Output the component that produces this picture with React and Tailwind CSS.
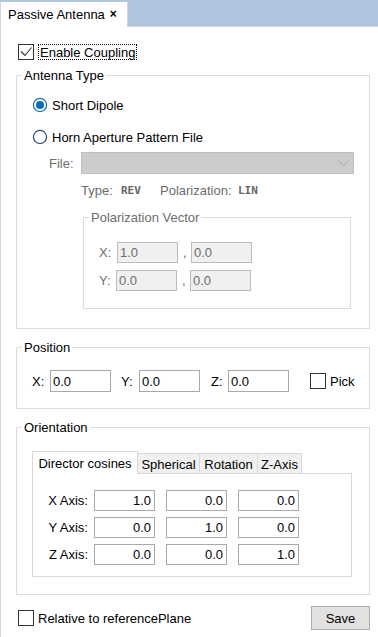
import React from 'react';

const CheckBox = ({ checked }) => (
  <span className="w-[16px] h-[16px] border border-[#333333] bg-white flex items-center justify-center shrink-0">
    {checked && (
      <svg width="14" height="14" viewBox="0 0 14 14">
        <path d="M2 6.5 L6 10.5 L12.5 2.5" fill="none" stroke="#333333" strokeWidth="1.1" />
      </svg>
    )}
  </span>
);

const Radio = ({ checked }) => (
  <svg width="16" height="16" viewBox="0 0 16 16" className="shrink-0">
    <circle cx="8" cy="8" r="6.6" fill="white" stroke={checked ? '#0f6cbd' : '#2c4a6a'} strokeWidth="1.2" />
    {checked && <circle cx="8" cy="8" r="4" fill="#0f6cbd" />}
  </svg>
);

const Field = ({ value, disabled, right, h = 'h-[21px]' }) => (
  <div
    className={`w-[61px] ${h} border flex items-center px-[2px] text-[13px] leading-none ${
      disabled ? 'border-[#bcbcbc] bg-[#f0f0f0] text-[#6d6d6d]' : 'border-[#a9a9a9] bg-white text-black'
    } ${right ? 'justify-end pr-[3px]' : ''}`}
  >
    {value}
  </div>
);

const Group = ({ title, className, children }) => (
  <fieldset className={`border border-[#dcdcdc] ${className}`}>
    <legend className="ml-[5px] px-[2px] leading-[15px] text-[13px]">{title}</legend>
    {children}
  </fieldset>
);

const Tab = ({ label, active, w }) =>
  active ? (
    <div className={`${w} h-[23px] -mb-px bg-white border border-b-0 border-[#d9d9d9] flex items-center justify-center z-10`}>
      {label}
    </div>
  ) : (
    <div className={`${w} h-[20px] bg-[#f0f0f0] border-t border-r border-[#d9d9d9] flex items-center justify-center pt-[1px]`}>
      {label}
    </div>
  );

const axes = [
  ['X Axis:', '1.0', '0.0', '0.0'],
  ['Y Axis:', '0.0', '1.0', '0.0'],
  ['Z Axis:', '0.0', '0.0', '1.0'],
];

export default function App() {
  return (
    <div className="w-[378px] h-[637px] bg-white text-black text-[13px] leading-[15px] font-['Liberation_Sans',Arial,sans-serif] overflow-hidden">
      {/* tab bar */}
      <div className="h-[27px] bg-[#b0c4de] border-b border-[#d4d4d4] flex items-end">
        <div className="w-[128px] h-[25px] -mb-px bg-white border-l border-r border-[#d4d4d4] flex items-center pl-[7px]">
          <span>Passive Antenna</span>
          <span className="ml-[5px] text-[12px] font-bold">×</span>
        </div>
      </div>

      <div className="h-[610px] border-l border-[#dadada] flex flex-col">
        <div className="mt-[17px] ml-[17px] flex items-center h-[16px]">
          <CheckBox checked />
          <span className="ml-[4px] h-[16px] border border-dotted border-black flex items-center pl-[1px] pr-[1px]">Enable Coupling</span>
        </div>

        {/* Antenna Type */}
        <Group title="Antenna Type" className="mt-[8px] ml-[15px] w-[354px] h-[261px]">
          <div className="pl-[15px] flex flex-col">
            <div className="mt-[14px] h-[16px] flex items-center">
              <Radio checked />
              <span className="ml-[4px]">Short Dipole</span>
            </div>
            <div className="mt-[16px] h-[16px] flex items-center">
              <Radio />
              <span className="ml-[4px]">Horn Aperture Pattern File</span>
            </div>
            <div className="mt-[7px] ml-[17px] h-[22px] flex items-center">
              <span className="w-[32px] text-[#6d6d6d]">File:</span>
              <div className="w-[273px] h-[22px] bg-[#cccccc] border border-[#bfbfbf] flex items-center justify-end pr-[4px]">
                <svg width="11" height="7" viewBox="0 0 11 7">
                  <path d="M0.5 0.5 L5.5 5.5 L10.5 0.5" fill="none" stroke="#a6a6a6" strokeWidth="1" />
                </svg>
              </div>
            </div>
            <div className="mt-[9px] ml-[49px] h-[15px] flex items-center text-[#6d6d6d]">
              <span className="w-[40px]">Type:</span>
              <span className="w-[39px] font-bold text-[11px] font-['DejaVu_Sans_Mono',monospace] text-[#666666]">REV</span>
              <span className="w-[78px]">Polarization:</span>
              <span className="font-bold text-[11px] font-['DejaVu_Sans_Mono',monospace] text-[#666666]">LIN</span>
            </div>

            <fieldset className="mt-[12px] ml-[51px] w-[268px] h-[99px] border border-[#dcdcdc]">
              <legend className="ml-[5px] px-[2px] leading-[15px] text-[#6d6d6d]">Polarization Vector</legend>
              <div className="pl-[15px] flex flex-col text-[#6d6d6d]">
                <div className="mt-[17px] flex items-center">
                  <span className="w-[18px]">X:</span>
                  <Field value="1.0" disabled />
                  <span className="w-[13px] pl-[5px]">,</span>
                  <Field value="0.0" disabled />
                </div>
                <div className="mt-[7px] flex items-center">
                  <span className="w-[17px]">Y:</span>
                  <Field value="0.0" disabled />
                  <span className="w-[13px] pl-[5px]">,</span>
                  <Field value="0.0" disabled />
                </div>
              </div>
            </fieldset>
          </div>
        </Group>

        {/* Position */}
        <Group title="Position" className="mt-[11px] ml-[15px] w-[354px] h-[69px]">
          <div className="pl-[15px] mt-[15px] flex items-center">
            <span className="w-[18px]">X:</span>
            <Field value="0.0" h="h-[22px]" />
            <span className="ml-[10px] w-[18px]">Y:</span>
            <Field value="0.0" h="h-[22px]" />
            <span className="ml-[11px] w-[17px]">Z:</span>
            <Field value="0.0" h="h-[22px]" />
            <span className="ml-[21px]">
              <CheckBox />
            </span>
            <span className="ml-[4px]">Pick</span>
          </div>
        </Group>

        {/* Orientation */}
        <Group title="Orientation" className="mt-[11px] ml-[15px] w-[354px] h-[175px]">
          <div className="pl-[15px] mt-[16px]">
            <div className="flex items-end relative">
              <Tab label="Director cosines" active w="w-[106px]" />
              <Tab label="Spherical" w="w-[62px]" />
              <Tab label="Rotation" w="w-[58px]" />
              <Tab label="Z-Axis" w="w-[44px]" />
            </div>
            <div className="w-[320px] h-[104px] border border-[#d9d9d9] bg-white pt-[16px] flex flex-col gap-[6px]">
              {axes.map(([label, a, b, c]) => (
                <div key={label} className="flex items-center">
                  <span className="w-[61px] text-right pr-[6px]">{label}</span>
                  <Field value={a} right />
                  <span className="w-[11px]" />
                  <Field value={b} right />
                  <span className="w-[11px]" />
                  <Field value={c} right />
                </div>
              ))}
            </div>
          </div>
        </Group>

        <div className="mt-[11px] h-[24px] pl-[17px] pr-[8px] flex items-center justify-between">
          <div className="flex items-center">
            <CheckBox />
            <span className="ml-[4px]">Relative to referencePlane</span>
          </div>
          <button className="w-[59px] h-[24px] bg-[#e1e1e1] border border-[#adadad] flex items-center justify-center">
            Save
          </button>
        </div>
      </div>
    </div>
  );
}
